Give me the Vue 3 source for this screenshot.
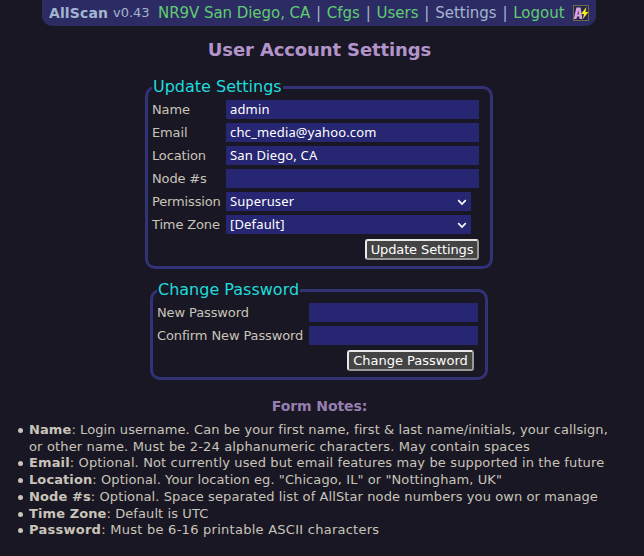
<script setup>
const settings = [
  { label: 'Name', value: 'admin' },
  { label: 'Email', value: 'chc_media@yahoo.com' },
  { label: 'Location', value: 'San Diego, CA' },
  { label: 'Node #s', value: '' },
  { label: 'Permission', value: 'Superuser', select: true },
  { label: 'Time Zone', value: '[Default]', select: true },
]
const passwords = ['New Password', 'Confirm New Password']
const notes = [
  ['Name', 'Login username. Can be your first name, first & last name/initials, your callsign,', 'or other name. Must be 2-24 alphanumeric characters. May contain spaces'],
  ['Email', 'Optional. Not currently used but email features may be supported in the future'],
  ['Location', 'Optional. Your location eg. "Chicago, IL" or "Nottingham, UK"'],
  ['Node #s', 'Optional. Space separated list of AllStar node numbers you own or manage'],
  ['Time Zone', 'Default is UTC'],
  ['Password', 'Must be 6-16 printable ASCII characters'],
]
</script>

<template>
  <div class="page">
    <header class="bar">
      <b class="brand">AllScan</b><span class="ver">v0.43</span>
      <nav class="nav"><a class="site">NR9V San Diego, CA</a> | <a>Cfgs</a> | <a>Users</a> | <span>Settings</span> | <a>Logout</a></nav>
      <svg class="logo" width="16" height="16" viewBox="0 0 16 16">
        <rect x=".5" y=".5" width="15" height="15" fill="#29264e" stroke="#6d6a48" />
        <path fill-rule="evenodd" d="M.8 14 3.4 2.5H7.6L9.4 14H6.6L6.2 11.6H4L3.5 14ZM4.4 9.4H5.9L5.3 5Z" fill="#dca6e0" />
        <path d="M13.4 2 8 9H11L9.8 14 15.4 7H12.5Z" fill="#f4f01c" />
      </svg>
    </header>

    <h1 class="title">User Account Settings</h1>

    <fieldset class="box update">
      <legend>Update Settings</legend>
      <label v-for="f in settings" :key="f.label" class="row">
        <span class="label">{{ f.label }}</span>
        <span v-if="f.select" class="pick">
          <select class="field"><option>{{ f.value }}</option></select>
          <svg class="chev" width="10" height="7" viewBox="0 0 10 7"><path d="M1.2 1.2 5 5 8.8 1.2" fill="none" stroke="#fff" stroke-width="1.7" /></svg>
        </span>
        <input v-else class="field" :value="f.value" />
      </label>
      <div class="actions"><button>Update Settings</button></div>
    </fieldset>

    <fieldset class="box change">
      <legend>Change Password</legend>
      <label v-for="p in passwords" :key="p" class="row">
        <span class="label">{{ p }}</span>
        <input class="field" type="password" />
      </label>
      <div class="actions"><button>Change Password</button></div>
    </fieldset>

    <h2 class="sub">Form Notes:</h2>
    <ul class="notes">
      <li v-for="n in notes" :key="n[0]"><b>{{ n[0] }}</b>: {{ n[1] }}<template v-if="n[2]"><br /><span class="more">{{ n[2] }}</span></template></li>
    </ul>
  </div>
</template>

<style>
body { background: #191724; }
</style>

<style scoped>
.page { box-sizing: border-box; width: 644px; height: 556px; overflow: hidden; display: flex; flex-direction: column; align-items: center; background: #191724; color: #c9c4b9; font: 13px/16px "DejaVu Sans", sans-serif; }
.bar { box-sizing: border-box; width: 554px; height: 26px; margin-right: 6px; padding: 0 7px; display: flex; align-items: center; border-radius: 0 0 10px 10px; background: #2d2b63; color: #a3b5d0; white-space: nowrap; }
.brand { font-size: 14px; width: 64px; letter-spacing: .12px; }
.ver { width: 45px; font-size: 13px; }
.nav { flex: 1; font-size: 15px; word-spacing: 1px; }
.nav a { color: #5fcb72; }
.nav .site { word-spacing: 0; letter-spacing: -.05px; }
.logo { flex: none; }
.title { margin: 12px 0 0; padding-right: 5px; height: 24px; font-size: 18px; line-height: 24px; letter-spacing: -.12px; color: #b294cb; white-space: nowrap; }
.box { box-sizing: border-box; min-width: 0; margin: 0; border: 3px solid #323278; border-radius: 10px; }
.update { width: 348px; height: 192px; margin: 15px 6px 0 0; padding: 0 11px 0 4px; }
.change { width: 338px; height: 100px; margin: 11px 6px 0 0; padding: 0 7px 0 4px; }
legend { height: 20px; padding: 0 1px; margin-bottom: 3px; font-size: 16px; line-height: 20px; color: #1fdcdc; white-space: nowrap; }
.row { display: flex; height: 23px; align-items: flex-start; }
.label { flex: none; width: 74px; line-height: 20px; letter-spacing: -.14px; white-space: nowrap; }
.change .label { width: 152px; letter-spacing: -.12px; }
.field { display: block; box-sizing: border-box; width: 253px; height: 19px; margin: 0; padding: 0 4px; border: 0; border-radius: 0; outline: 0; appearance: none; background: #272672; color: #fff; font: 13px/19px "Noto Sans", sans-serif; letter-spacing: .16px; }
.change .field { width: 169px; }
.pick { position: relative; width: 245px; height: 19px; }
.pick .field { width: 245px; }
.chev { position: absolute; right: 4px; top: 7px; }
.actions { display: flex; justify-content: flex-end; padding-top: 1px; }
.change .actions { padding-right: 4px; }
button { box-sizing: border-box; width: 114px; height: 21px; margin: 0; padding: 0; border: 2px solid; border-color: #e8e8e8 #999 #999 #e8e8e8; border-radius: 3px; background: #444; color: #fff; font: 13px/17px "DejaVu Sans", sans-serif; letter-spacing: -.12px; white-space: nowrap; }
.change button { width: 127px; letter-spacing: 0; }
.sub { margin: 17px 0 0; padding-right: 5px; font-size: 14px; line-height: 18px; letter-spacing: -.1px; color: #977eae; }
.notes { align-self: stretch; margin: 7px 0 0; padding: 0 0 0 29px; font-size: 13px; line-height: 16.7px; letter-spacing: .09px; white-space: nowrap; list-style: none; }
.notes li::before { content: ""; float: left; width: 5px; height: 5px; margin: 6px 0 0 -11px; border-radius: 50%; background: #c9c4b9; }
.notes .more { letter-spacing: .155px; }
.notes li:nth-child(2) { letter-spacing: .135px; }
.notes li:nth-child(4) { letter-spacing: .1px; }
.notes li:nth-child(6) { letter-spacing: .26px; }
</style>
